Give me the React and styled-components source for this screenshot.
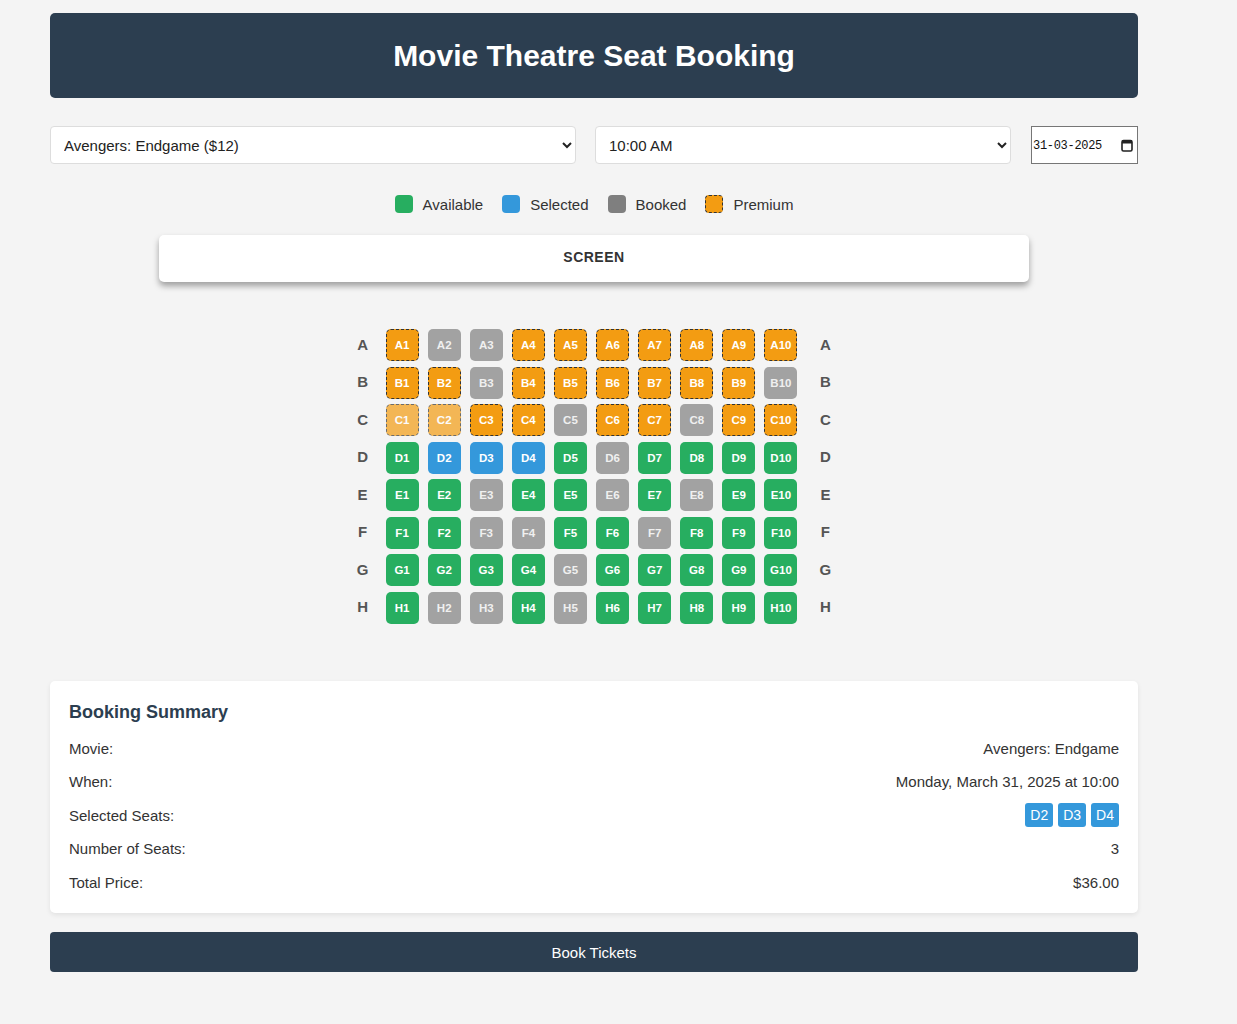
import React, { useState } from 'react';
import styled, { createGlobalStyle, css } from 'styled-components';

const GlobalStyle = createGlobalStyle`
  body {
    margin: 0;
    background-color: #f4f4f4;
    font-family: "Liberation Sans", Arial, sans-serif;
    color: #333;
  }
`;

const Container = styled.div`
  width: 1088px;
  margin: 13px 0 0 50px;
  padding-bottom: 40px;
`;

const Header = styled.header`
  background-color: #2c3e50;
  border-radius: 5px;
  height: 85px;
  display: flex;
  align-items: center;
  justify-content: center;
`;

const Title = styled.h1`
  margin: 0;
  color: #fff;
  font-size: 30px;
  font-weight: bold;
`;

const Controls = styled.div`
  display: flex;
  gap: 19px;
  margin-top: 28px;
`;

const Select = styled.select`
  flex: 0 0 ${(p) => p.$width}px;
  height: 38px;
  padding: 0 8px 0 9px;
  border: 1px solid #ddd;
  border-radius: 4px;
  background-color: #fff;
  font-family: "Liberation Sans", Arial, sans-serif;
  font-size: 15px;
  color: #222;
`;

const DateField = styled.label`
  box-sizing: border-box;
  display: flex;
  align-items: center;
  width: 107px;
  height: 38px;
  margin-left: 1px;
  padding: 0 4px 0 1px;
  border: 1px solid #767676;
  background-color: #fff;
`;

const DateText = styled.input`
  flex: 1;
  min-width: 0;
  padding: 2px 0 0;
  border: none;
  outline: none;
  background: transparent;
  font-family: "Liberation Mono", monospace;
  font-size: 12px;
  letter-spacing: -0.3px;
  color: #111;
`;

const CalendarIcon = () => (
  <svg width="12" height="13" viewBox="0 0 12 13" aria-hidden="true">
    <rect x="1" y="1.5" width="10" height="10.5" rx="1.5" fill="none" stroke="#222" strokeWidth="1.6" />
    <rect x="1" y="1.5" width="10" height="3" fill="#222" />
  </svg>
);

const Legend = styled.div`
  display: flex;
  justify-content: center;
  gap: 19px;
  margin-top: 31px;
`;

const LegendItem = styled.div`
  display: flex;
  align-items: center;
  gap: 10px;
  font-size: 15px;
  line-height: 17px;
  color: #333;
`;

const seatColors = {
  available: '#27ae60',
  selected: '#3498db',
  booked: '#7f7f7f',
  premium: '#f39c12',
};

const Swatch = styled.span`
  box-sizing: border-box;
  width: 18px;
  height: 18px;
  border-radius: 4px;
  background-color: ${(p) => seatColors[p.$kind]};
  ${(p) => p.$kind === 'premium' && css`border: 1px dashed #333;`}
`;

const Screen = styled.div`
  width: 870px;
  height: 47px;
  margin: 22px auto 0;
  padding-bottom: 3px;
  box-sizing: border-box;
  background-color: #fff;
  border-radius: 5px;
  box-shadow: 0 4px 6px rgba(0, 0, 0, 0.35);
  display: flex;
  align-items: center;
  justify-content: center;
  font-size: 14px;
  font-weight: bold;
  letter-spacing: 0.5px;
  color: #333;
`;

const SeatMap = styled.div`
  display: flex;
  flex-direction: column;
  align-items: center;
  gap: 5.5px;
  margin-top: 47px;
`;

const Row = styled.div`
  display: flex;
  align-items: center;
`;

const RowLabel = styled.span`
  width: 20px;
  text-align: center;
  font-size: 15px;
  font-weight: bold;
  color: #555;
  margin: ${(p) => (p.$side === 'left' ? '-2px 13px 0 0' : '-2px 0 0 18px')};
`;

const Seats = styled.div`
  display: flex;
  gap: 9.1px;
`;

const Seat = styled.button`
  box-sizing: border-box;
  width: 33px;
  height: 32px;
  padding: 0;
  border: none;
  border-radius: 5px;
  font-family: "Liberation Sans", Arial, sans-serif;
  font-size: 11.5px;
  font-weight: bold;
  color: #fff;
  cursor: pointer;
  background-color: ${(p) =>
    p.$status === 'booked'
      ? '#a2a2a2'
      : p.$status === 'selected'
      ? '#3498db'
      : p.$premium
      ? '#f39c12'
      : '#27ae60'};
  ${(p) => p.$status === 'booked' && css`color: #f0f0f0; cursor: default;`}
  ${(p) => p.$premium && p.$status !== 'booked' && css`border: 1px dashed #333;`}
  ${(p) => p.$faded && css`opacity: 0.7;`}
`;

const SummaryCard = styled.section`
  margin-top: 57px;
  background-color: #fff;
  border-radius: 5px;
  box-shadow: 0 2px 5px rgba(0, 0, 0, 0.08);
  padding: 21px 19px 19px;
`;

const SummaryTitle = styled.h2`
  margin: 0 0 14px;
  font-size: 18px;
  font-weight: bold;
  color: #2c3e50;
`;

const SummaryRows = styled.div`
  display: flex;
  flex-direction: column;
  gap: 9.4px;
`;

const SummaryRow = styled.div`
  display: flex;
  justify-content: space-between;
  align-items: center;
  height: 24px;
  font-size: 15px;
  color: #333;
`;

const Tags = styled.div`
  display: flex;
  gap: 5px;
`;

const Tag = styled.span`
  background-color: #3498db;
  color: #fff;
  font-size: 14px;
  padding: 4px 5px;
  border-radius: 3px;
`;

const BookButton = styled.button`
  width: 100%;
  height: 40px;
  margin-top: 19px;
  padding-top: 2px;
  border: none;
  border-radius: 4px;
  background-color: #2c3e50;
  color: #fff;
  font-family: "Liberation Sans", Arial, sans-serif;
  font-size: 15px;
  cursor: pointer;
`;

// P premium, p premium faded, B booked, G available, S selected
const layout = {
  A: 'PBBPPPPPPP',
  B: 'PPBPPPPPPB',
  C: 'ppPPBPPBPP',
  D: 'GSSSGBGGGG',
  E: 'GGBGGBGBGG',
  F: 'GGBBGGBGGG',
  G: 'GGGGBGGGGG',
  H: 'GBBGBGGGGG',
};

const statusOf = (c) => {
  if (c === 'B') return 'booked';
  if (c === 'S') return 'selected';
  return 'available';
};

const App = () => {
  const [movie, setMovie] = useState('endgame');
  const [time, setTime] = useState('10:00');
  const [date, setDate] = useState('31-03-2025');

  return (
    <>
      <GlobalStyle />
      <Container>
        <Header>
          <Title>Movie Theatre Seat Booking</Title>
        </Header>

        <Controls>
          <Select $width={526} value={movie} onChange={(e) => setMovie(e.target.value)}>
            <option value="endgame">Avengers: Endgame ($12)</option>
            <option value="joker">Joker ($10)</option>
          </Select>
          <Select $width={416} value={time} onChange={(e) => setTime(e.target.value)}>
            <option value="10:00">10:00 AM</option>
            <option value="13:00">1:00 PM</option>
          </Select>
          <DateField>
            <DateText value={date} onChange={(e) => setDate(e.target.value)} />
            <CalendarIcon />
          </DateField>
        </Controls>

        <Legend>
          <LegendItem><Swatch $kind="available" />Available</LegendItem>
          <LegendItem><Swatch $kind="selected" />Selected</LegendItem>
          <LegendItem><Swatch $kind="booked" />Booked</LegendItem>
          <LegendItem><Swatch $kind="premium" />Premium</LegendItem>
        </Legend>

        <Screen>SCREEN</Screen>

        <SeatMap>
          {Object.entries(layout).map(([row, seats]) => (
            <Row key={row}>
              <RowLabel $side="left">{row}</RowLabel>
              <Seats>
                {seats.split('').map((c, i) => (
                  <Seat
                    key={i}
                    $status={statusOf(c)}
                    $premium={c === 'P' || c === 'p'}
                    $faded={c === 'p'}
                  >
                    {row}{i + 1}
                  </Seat>
                ))}
              </Seats>
              <RowLabel $side="right">{row}</RowLabel>
            </Row>
          ))}
        </SeatMap>

        <SummaryCard>
          <SummaryTitle>Booking Summary</SummaryTitle>
          <SummaryRows>
            <SummaryRow><span>Movie:</span><span>Avengers: Endgame</span></SummaryRow>
            <SummaryRow><span>When:</span><span>Monday, March 31, 2025 at 10:00</span></SummaryRow>
            <SummaryRow>
              <span>Selected Seats:</span>
              <Tags>
                <Tag>D2</Tag>
                <Tag>D3</Tag>
                <Tag>D4</Tag>
              </Tags>
            </SummaryRow>
            <SummaryRow><span>Number of Seats:</span><span>3</span></SummaryRow>
            <SummaryRow><span>Total Price:</span><span>$36.00</span></SummaryRow>
          </SummaryRows>
        </SummaryCard>

        <BookButton>Book Tickets</BookButton>
      </Container>
    </>
  );
};

export default App;
